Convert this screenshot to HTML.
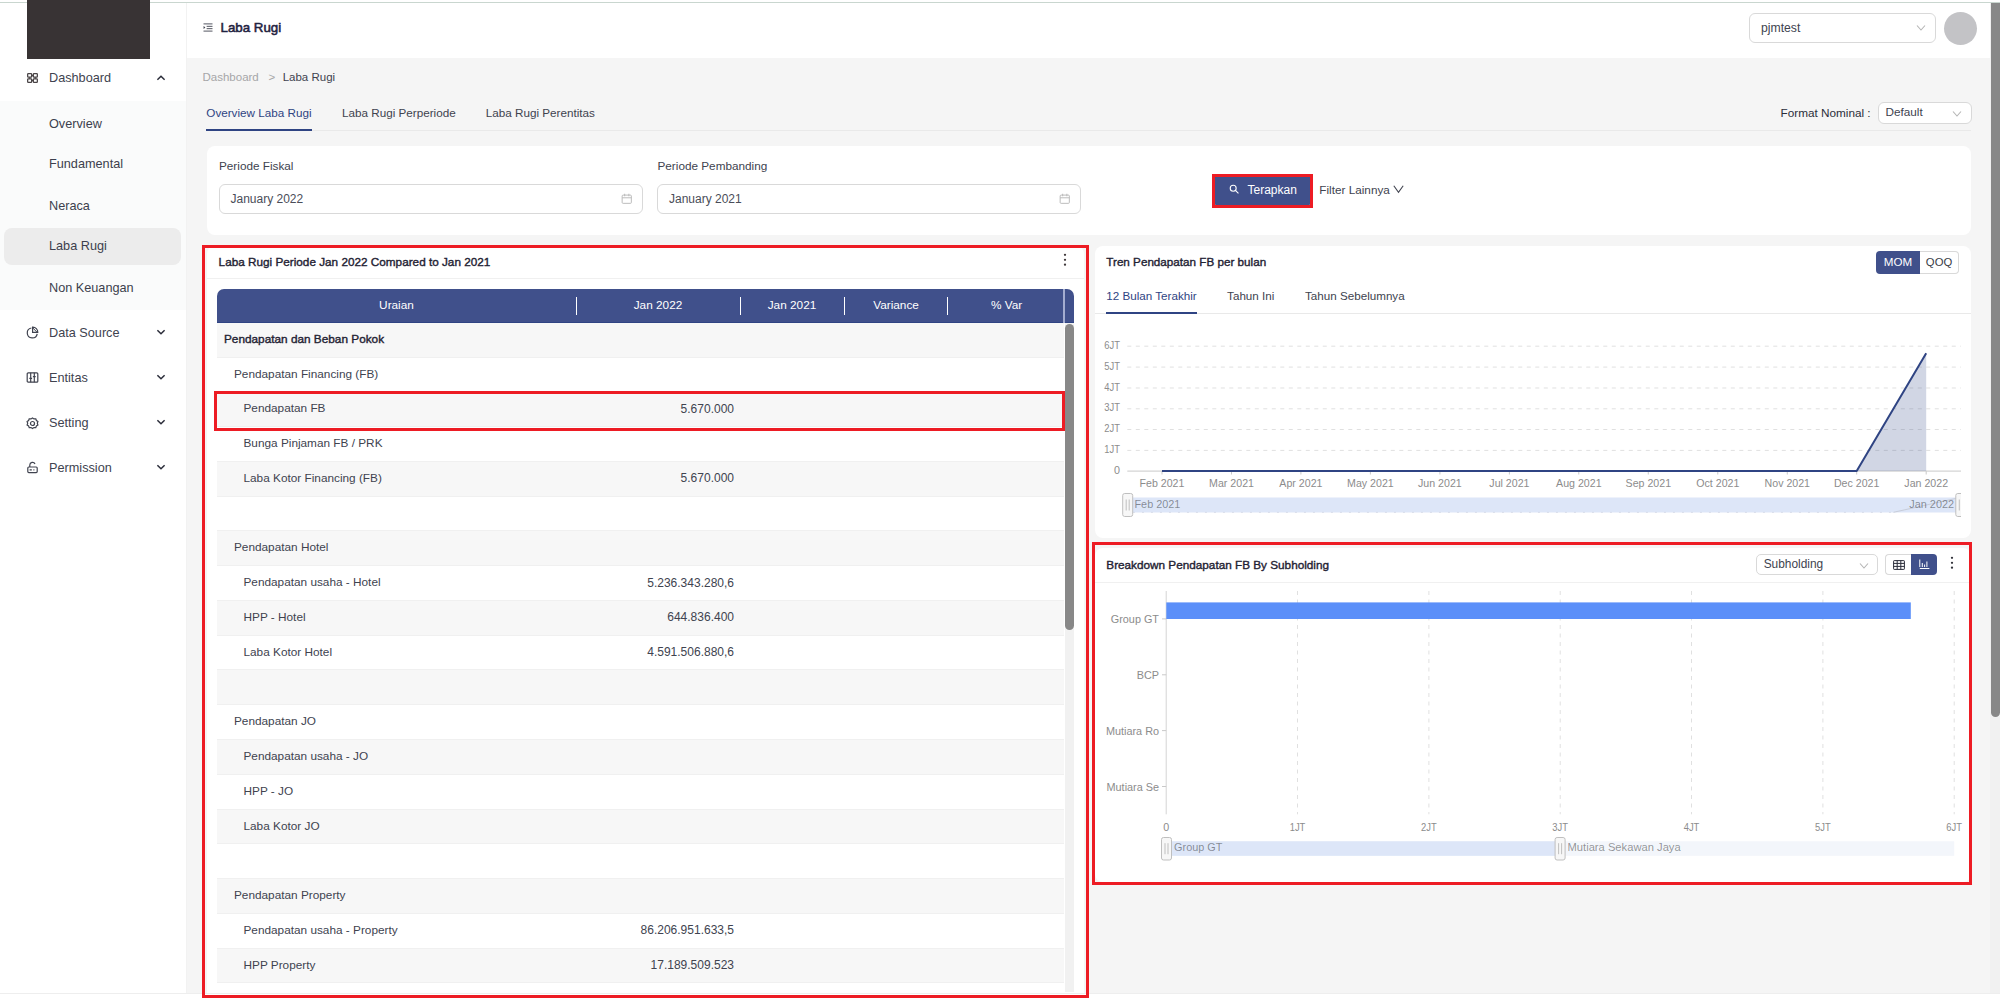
<!DOCTYPE html>
<html lang="id">
<head>
<meta charset="utf-8">
<title>Laba Rugi</title>
<style>
*{box-sizing:border-box;margin:0;padding:0}
html,body{width:2000px;height:999px;overflow:hidden;background:#f5f5f5}
body{font-family:"Liberation Sans",Arial,sans-serif;font-size:11.8px;color:#40434f;position:relative}
.abs{position:absolute}
#topline{position:absolute;left:0;top:0;width:2000px;height:3px;background:#fff;border-bottom:1px solid #c9d6cf}
/* sidebar */
#sidebar{position:absolute;left:0;top:3px;width:187px;height:991px;background:#fff;border-right:1px solid #f2f2f2}
#logo{position:absolute;left:27px;top:0;width:123px;height:58.5px;background:#383334;z-index:3}
#submenu{position:absolute;left:0;top:97.5px;width:186px;height:209.5px;background:#fafbfb}
#active{position:absolute;left:4px;top:224.5px;width:177px;height:37px;border-radius:8px;background:#ececec}
.nav{position:absolute;left:49px;font-size:12.7px;line-height:16px;color:#3c3f4d;white-space:nowrap}
.nav.top{color:#40434f}
.ico{position:absolute;left:26px;width:13px;height:13px}
.chev{position:absolute;left:156px;width:10px;height:10px}
/* header */
#header{position:absolute;left:187px;top:3px;width:1803px;height:54.5px;background:#fff}
#htitle{position:absolute;left:33.5px;top:16.3px;font-size:13.3px;font-weight:400;-webkit-text-stroke:0.55px #1f2240;color:#1f2240;line-height:18px;white-space:nowrap}
#usersel{position:absolute;left:1562px;top:10px;width:187px;height:29.5px;border:1px solid #d9d9d9;border-radius:6px;background:#fff}
#usersel span{position:absolute;left:11px;top:6.5px;font-size:12.2px;line-height:14px;color:#40434f}
#avatar{position:absolute;left:1756.5px;top:8.8px;width:33.2px;height:33.2px;border-radius:50%;background:#c3c3c6}
/* scrollbar */
#vscroll{position:absolute;left:1990px;top:3px;width:10px;height:996px;background:#f1f1f1}
#vthumb{position:absolute;left:0.6px;top:0;width:9.4px;height:713.6px;background:#888;border-radius:0 0 5px 5px}
#bottom{position:absolute;left:0;top:993.3px;width:2000px;height:6px;background:#fff;border-top:1px solid #eeeeee;z-index:4}
/* content */
.crumb{position:absolute;top:70px;font-size:11.5px;line-height:14px;white-space:nowrap}
.tab{position:absolute;top:106px;font-size:11.7px;line-height:14px;color:#40434f;white-space:nowrap}
.tab.on{color:#2f4483}
#tabline{position:absolute;left:207px;top:129.5px;width:1764px;height:1px;background:#e9e9e9}
#tabink{position:absolute;left:206px;top:128.5px;width:106px;height:2px;background:#2f4483}
.card{position:absolute;background:#fff;border-radius:8px}
.sel{position:absolute;border:1px solid #d9d9d9;border-radius:6px;background:#fff}
.lbl{position:absolute;font-size:11.75px;line-height:14px;color:#40434f;white-space:nowrap}
.inp{position:absolute;height:29.5px;border:1px solid #d9d9d9;border-radius:6px;background:#fff}
.inp span{position:absolute;left:11px;top:7px;font-size:12px;line-height:14px;color:#4a4d58}
.inp svg{position:absolute;right:10px;top:8.3px}
.red{position:absolute;z-index:5;border:3.3px solid #ed1c24;pointer-events:none}
.ctitle{position:absolute;font-size:11.75px;font-weight:400;-webkit-text-stroke:0.38px #1f2233;color:#1f2233;line-height:14px;white-space:nowrap}
.hline{position:absolute;height:1px;background:#f0f0f0}
/* table */
#thead{position:absolute;left:10px;top:43px;width:857px;height:33.5px;background:#40508b;border-radius:7px 7px 0 0;border-bottom:1px solid #2f4483}
#thead .th{position:absolute;top:8.7px;font-size:11.8px;line-height:14px;color:#fff;text-align:center;white-space:nowrap}
#thead i{position:absolute;top:7.3px;width:1.4px;height:18px;background:#fff}
#thead b{position:absolute;left:846.2px;top:0;width:1.6px;height:33.5px;background:#a3acd0}
#tbody{position:absolute;left:10px;top:76.5px;width:847px;height:669px;overflow:hidden;background:#fff}
.r{position:relative;height:34.77px;border-bottom:1px solid #f0f0f0;background:#fff}
.r.odd{background:#f7f7f7}
.r .lab{position:absolute;top:9px;line-height:14px;font-size:11.8px;color:#40434f;white-space:nowrap}
.r.l0 .lab{left:7px;font-weight:400;font-size:11.8px;-webkit-text-stroke:0.38px #1f2233;color:#1f2233}
.r.l1 .lab{left:17px}
.r.l2 .lab{left:26.5px}
.r .val{position:absolute;right:330px;top:9.5px;line-height:14px;font-size:12px;color:#40434f;white-space:nowrap}
#tscroll{position:absolute;left:857.5px;top:76.5px;width:9.5px;height:669px;background:#f1f1f1}
#tthumb{position:absolute;left:0.3px;top:1px;width:9px;height:306px;border-radius:4.5px;background:#888}
/* charts */
svg text.ax{font-family:"Liberation Sans",Arial,sans-serif;font-size:11.2px;fill:#8c8c8c}
svg text.sl{font-family:"Liberation Sans",Arial,sans-serif;font-size:11.2px;fill:#000;fill-opacity:.42}
svg .grid{stroke:#e0e0e0;stroke-width:1;stroke-dasharray:4 4.5}
.btn{position:absolute;font-size:11.6px;line-height:14px;text-align:center;white-space:nowrap}
</style>
</head>
<body>
<div id="topline"></div>

<aside id="sidebar">
  <div id="logo" style="top:-3px"></div>
  <div id="submenu"></div>
  <div id="active"></div>
  <nav>
    <svg class="abs" style="left:27px;top:70px" width="11" height="10" viewBox="0 0 11 10" fill="none" stroke="#494446" stroke-width="1.25"><rect x="0.65" y="0.65" width="4" height="3.5" rx="0.7"/><rect x="6.35" y="0.65" width="4" height="3.5" rx="0.7"/><rect x="0.65" y="5.85" width="4" height="3.5" rx="0.7"/><rect x="6.35" y="5.85" width="4" height="3.5" rx="0.7"/><path d="M4.65 2.4h1.7M4.65 7.6h1.7M2.65 4.15v1.7M8.35 4.15v1.7" stroke-width="1.5"/></svg>
    <span class="nav top" style="top:66.5px">Dashboard</span>
    <svg class="chev" style="top:69.8px" viewBox="0 0 10 10" fill="none" stroke="#2b2d3a" stroke-width="1.5"><path d="M1.4 6.8L5 3.2l3.6 3.6"/></svg>
    <span class="nav" style="top:112.5px">Overview</span>
    <span class="nav" style="top:152.5px">Fundamental</span>
    <span class="nav" style="top:194.5px">Neraca</span>
    <span class="nav" style="top:235px">Laba Rugi</span>
    <span class="nav" style="top:276.5px">Non Keuangan</span>
    <svg class="ico" style="top:322.5px" viewBox="0 0 13 13" fill="none" stroke="#40434f" stroke-width="1.2"><path d="M5.4 2a5 5 0 1 0 5.8 5.8"/><path d="M6.6 1.2a5 5 0 0 1 5.2 5.2H6.6z"/><path d="M6.6 1.8l4.4 4.4" stroke-width="1"/></svg>
    <span class="nav top" style="top:321.8px">Data Source</span>
    <svg class="chev" style="top:323.5px" viewBox="0 0 10 10" fill="none" stroke="#2b2d3a" stroke-width="1.5"><path d="M1.4 3.2L5 6.8l3.6-3.6"/></svg>
    <svg class="ico" style="top:367.5px" viewBox="0 0 13 13" fill="none" stroke="#40434f" stroke-width="1.2"><rect x="1.2" y="1.8" width="10.6" height="9.4" rx="1"/><path d="M4.7 1.8v9.4M8.3 1.8v9.4M3.3 7.4h2.8M6.9 5.6h2.8"/></svg>
    <span class="nav top" style="top:366.5px">Entitas</span>
    <svg class="chev" style="top:368.5px" viewBox="0 0 10 10" fill="none" stroke="#2b2d3a" stroke-width="1.5"><path d="M1.4 3.2L5 6.8l3.6-3.6"/></svg>
    <svg class="ico" style="top:413.5px" viewBox="0 0 13 13" fill="none" stroke="#40434f" stroke-width="1.2"><path d="M6.5 0.9l1.5 1 1.8-.1.6 1.7 1.5 1-.6 1.7.6 1.7-1.5 1-.6 1.7-1.8-.1-1.5 1-1.5-1-1.8.1-.6-1.7-1.5-1 .6-1.7-.6-1.7 1.5-1 .6-1.7 1.8.1z"/><circle cx="6.5" cy="6.5" r="2"/></svg>
    <span class="nav top" style="top:412.3px">Setting</span>
    <svg class="chev" style="top:414px" viewBox="0 0 10 10" fill="none" stroke="#2b2d3a" stroke-width="1.5"><path d="M1.4 3.2L5 6.8l3.6-3.6"/></svg>
    <svg class="ico" style="top:457.5px" viewBox="0 0 13 13" fill="none" stroke="#40434f" stroke-width="1.2"><rect x="1.8" y="6" width="9.4" height="5.6" rx="1"/><path d="M3.8 6V4a2.7 2.7 0 0 1 5.2-1"/><path d="M3.6 8.8h2.2M7.4 8.8h1"/></svg>
    <span class="nav top" style="top:457px">Permission</span>
    <svg class="chev" style="top:458.5px" viewBox="0 0 10 10" fill="none" stroke="#2b2d3a" stroke-width="1.5"><path d="M1.4 3.2L5 6.8l3.6-3.6"/></svg>
  </nav>
</aside>

<header id="header">
  <svg class="abs" style="left:15.5px;top:19.7px" width="10" height="9" viewBox="0 0 11 10" fill="none" stroke="#40434f" stroke-width="1"><path d="M0.5 1h10M4 3.7h6.5M4 6.3h6.5M0.5 9h10"/><path d="M0.6 3.4l2 1.6-2 1.6z" fill="#40434f" stroke="none"/></svg>
  <h1 id="htitle">Laba Rugi</h1>
  <div id="usersel"><span>pjmtest</span>
    <svg class="abs" style="left:166px;top:10px" width="10" height="8" viewBox="0 0 10 8" fill="none" stroke="#b5b5b5" stroke-width="1.1"><path d="M1 1.5l4 4.5 4-4.5"/></svg>
  </div>
  <div id="avatar"></div>
</header>

<div id="vscroll"><div id="vthumb"></div></div>

<main>
  <span class="crumb" style="left:202.5px;color:#a6a6a8">Dashboard</span>
  <span class="crumb" style="left:268.5px;color:#a6a6a8">&gt;</span>
  <span class="crumb" style="left:282.7px;color:#40434f">Laba Rugi</span>

  <span class="tab on" style="left:206.3px">Overview Laba Rugi</span>
  <span class="tab" style="left:342px">Laba Rugi Perperiode</span>
  <span class="tab" style="left:485.8px">Laba Rugi Perentitas</span>
  <div id="tabline"></div><div id="tabink"></div>
  <span class="lbl" style="left:1780.5px;top:106px;color:#2b2d3a">Format Nominal :</span>
  <div class="sel" style="left:1878px;top:102.3px;width:93.5px;height:21.7px"><span class="lbl" style="left:6.5px;top:2px">Default</span>
    <svg class="abs" style="left:72.5px;top:6.5px" width="10" height="8" viewBox="0 0 10 8" fill="none" stroke="#b5b5b5" stroke-width="1.1"><path d="M1 1.5l4 4.5 4-4.5"/></svg>
  </div>

  <!-- filter card -->
  <section class="card" style="left:207px;top:146.2px;width:1764px;height:88.5px">
    <span class="lbl" style="left:12px;top:12.8px">Periode Fiskal</span>
    <div class="inp" style="left:11.5px;top:38px;width:424.5px"><span>January 2022</span>
      <svg width="11.5" height="11.5" viewBox="0 0 12 12" fill="none" stroke="#b9b9b9" stroke-width="1"><rect x="1.2" y="2.2" width="9.6" height="8.6" rx="1"/><path d="M1.2 5h9.6M3.8 0.8v2.6M8.2 0.8v2.6"/></svg></div>
    <span class="lbl" style="left:450.5px;top:12.8px">Periode Pembanding</span>
    <div class="inp" style="left:450px;top:38px;width:424px"><span>January 2021</span>
      <svg width="11.5" height="11.5" viewBox="0 0 12 12" fill="none" stroke="#b9b9b9" stroke-width="1"><rect x="1.2" y="2.2" width="9.6" height="8.6" rx="1"/><path d="M1.2 5h9.6M3.8 0.8v2.6M8.2 0.8v2.6"/></svg></div>
    <button class="abs" style="left:1007px;top:30.3px;width:97px;height:29px;background:#40508b;border:0;border-radius:2px;color:#fff;font-family:inherit">
      <svg class="abs" style="left:14.5px;top:8px" width="10.5" height="10.5" viewBox="0 0 12 12" fill="none" stroke="#fff" stroke-width="1.25"><circle cx="4.8" cy="4.8" r="3.4"/><path d="M7.4 7.4l3.4 3.4"/></svg>
      <span class="abs" style="left:33.5px;top:6.8px;font-size:12px;line-height:14px">Terapkan</span>
    </button>
    <span class="lbl" style="left:1112.3px;top:36.5px">Filter Lainnya</span>
    <svg class="abs" style="left:1185.5px;top:39px" width="11" height="9" viewBox="0 0 11 9" fill="none" stroke="#40434f" stroke-width="1.1"><path d="M0.8 0.8l4.7 6.6 4.7-6.6"/></svg>
  </section>
  <div class="red" style="left:1211.8px;top:174.2px;width:101.6px;height:33.4px"></div>

  <!-- left panel -->
  <section class="card" id="lr" style="left:207px;top:246.3px;width:876.5px;height:760px;border-radius:8px 8px 0 0">
    <h2 class="ctitle" style="left:11.6px;top:8.7px">Laba Rugi Periode Jan 2022 Compared to Jan 2021</h2>
    <svg class="abs" style="left:855.5px;top:6.8px" width="4" height="14" viewBox="0 0 4 14" fill="#403a3c"><circle cx="2" cy="1.8" r="1.15"/><circle cx="2" cy="6.8" r="1.15"/><circle cx="2" cy="11.7" r="1.15"/></svg>
    <div class="hline" style="left:0;top:32px;width:876.5px"></div>
    <div id="thead">
      <span class="th" style="left:0;width:359px">Uraian</span><i style="left:358.5px"></i>
      <span class="th" style="left:359px;width:164px">Jan 2022</span><i style="left:522.5px"></i>
      <span class="th" style="left:523px;width:104px">Jan 2021</span><i style="left:626.5px"></i>
      <span class="th" style="left:627px;width:104px">Variance</span><i style="left:730px"></i>
      <span class="th" style="left:731px;width:117px">% Var</span><b></b>
    </div>
    <div id="tbody">
<div class="r l0 odd"><span class="lab">Pendapatan dan Beban Pokok</span><span class="val"></span></div>
<div class="r l1"><span class="lab">Pendapatan Financing (FB)</span><span class="val"></span></div>
<div class="r l2 odd"><span class="lab">Pendapatan FB</span><span class="val">5.670.000</span></div>
<div class="r l2"><span class="lab">Bunga Pinjaman FB / PRK</span><span class="val"></span></div>
<div class="r l2 odd"><span class="lab">Laba Kotor Financing (FB)</span><span class="val">5.670.000</span></div>
<div class="r l2"><span class="lab"></span><span class="val"></span></div>
<div class="r l1 odd"><span class="lab">Pendapatan Hotel</span><span class="val"></span></div>
<div class="r l2"><span class="lab">Pendapatan usaha - Hotel</span><span class="val">5.236.343.280,6</span></div>
<div class="r l2 odd"><span class="lab">HPP - Hotel</span><span class="val">644.836.400</span></div>
<div class="r l2"><span class="lab">Laba Kotor Hotel</span><span class="val">4.591.506.880,6</span></div>
<div class="r l2 odd"><span class="lab"></span><span class="val"></span></div>
<div class="r l1"><span class="lab">Pendapatan JO</span><span class="val"></span></div>
<div class="r l2 odd"><span class="lab">Pendapatan usaha - JO</span><span class="val"></span></div>
<div class="r l2"><span class="lab">HPP - JO</span><span class="val"></span></div>
<div class="r l2 odd"><span class="lab">Laba Kotor JO</span><span class="val"></span></div>
<div class="r l2"><span class="lab"></span><span class="val"></span></div>
<div class="r l1 odd"><span class="lab">Pendapatan Property</span><span class="val"></span></div>
<div class="r l2"><span class="lab">Pendapatan usaha - Property</span><span class="val">86.206.951.633,5</span></div>
<div class="r l2 odd"><span class="lab">HPP Property</span><span class="val">17.189.509.523</span></div>
<div class="r l2"><span class="lab">Laba Kotor Property</span><span class="val">69.017.442.110,5</span></div>
    </div>
    <div id="tscroll"><div id="tthumb"></div></div>
  </section>
  <div class="red" style="left:201.9px;top:245px;width:887.1px;height:753px;border-width:3.7px"></div>
  <div class="red" style="left:214.1px;top:391.1px;width:850.7px;height:39.9px;border-width:3.3px"></div>

  <!-- trend panel -->
  <section class="card" style="left:1094.5px;top:246px;width:876.5px;height:291.5px">
    <h2 class="ctitle" style="left:11.8px;top:9px;font-size:11.68px">Tren Pendapatan FB per bulan</h2>
    <div class="btn" style="left:781.5px;top:5px;width:44px;height:23.2px;background:#40508b;color:#fff;border-radius:4px 0 0 4px;padding-top:4px">MOM</div>
    <div class="btn" style="left:825.3px;top:5px;width:39.5px;height:23.2px;background:#fff;color:#3a3c48;border:1px solid #d9d9d9;border-left:0;border-radius:0 4px 4px 0;padding-top:3px;font-size:11.3px">QOQ</div>
    <span class="tab on" style="left:11.8px;top:43px;font-size:11.65px">12 Bulan Terakhir</span>
    <span class="tab" style="left:132.6px;top:43px;font-size:11.65px">Tahun Ini</span>
    <span class="tab" style="left:210.5px;top:43px;font-size:11.65px">Tahun Sebelumnya</span>
    <div class="hline" style="left:0;top:67.2px;width:876.5px;background:#e9e9e9"></div>
    <div class="abs" style="left:11.8px;top:65.6px;width:90.6px;height:2.2px;background:#2f4483"></div>
    <svg class="abs" style="left:0;top:0" width="866.2" height="291.5" viewBox="0 0 866.2 291.5">
<line x1="32.3" x2="866" y1="100.2" y2="100.2" class="grid"/>
<text transform="translate(25 102.9) scale(0.84 1)" class="ax" text-anchor="end">6JT</text>
<line x1="32.3" x2="866" y1="121.1" y2="121.1" class="grid"/>
<text transform="translate(25 123.8) scale(0.84 1)" class="ax" text-anchor="end">5JT</text>
<line x1="32.3" x2="866" y1="142.0" y2="142.0" class="grid"/>
<text transform="translate(25 144.7) scale(0.84 1)" class="ax" text-anchor="end">4JT</text>
<line x1="32.3" x2="866" y1="162.8" y2="162.8" class="grid"/>
<text transform="translate(25 165.5) scale(0.84 1)" class="ax" text-anchor="end">3JT</text>
<line x1="32.3" x2="866" y1="183.5" y2="183.5" class="grid"/>
<text transform="translate(25 186.2) scale(0.84 1)" class="ax" text-anchor="end">2JT</text>
<line x1="32.3" x2="866" y1="204.4" y2="204.4" class="grid"/>
<text transform="translate(25 207.1) scale(0.84 1)" class="ax" text-anchor="end">1JT</text>
<text transform="translate(25 227.8) scale(0.96 1)" class="ax" text-anchor="end">0</text>
<line x1="32.3" x2="866" y1="225.1" y2="225.1" stroke="#c9c9c9" stroke-width="1"/>
<line x1="67.0" x2="67.0" y1="225.1" y2="228.5" stroke="#c9c9c9" stroke-width="1"/>
<text transform="translate(67.0 241.2) scale(0.95 1)" class="ax" text-anchor="middle">Feb 2021</text>
<line x1="136.5" x2="136.5" y1="225.1" y2="228.5" stroke="#c9c9c9" stroke-width="1"/>
<text transform="translate(136.5 241.2) scale(0.95 1)" class="ax" text-anchor="middle">Mar 2021</text>
<line x1="205.9" x2="205.9" y1="225.1" y2="228.5" stroke="#c9c9c9" stroke-width="1"/>
<text transform="translate(205.9 241.2) scale(0.95 1)" class="ax" text-anchor="middle">Apr 2021</text>
<line x1="275.4" x2="275.4" y1="225.1" y2="228.5" stroke="#c9c9c9" stroke-width="1"/>
<text transform="translate(275.4 241.2) scale(0.95 1)" class="ax" text-anchor="middle">May 2021</text>
<line x1="344.9" x2="344.9" y1="225.1" y2="228.5" stroke="#c9c9c9" stroke-width="1"/>
<text transform="translate(344.9 241.2) scale(0.95 1)" class="ax" text-anchor="middle">Jun 2021</text>
<line x1="414.4" x2="414.4" y1="225.1" y2="228.5" stroke="#c9c9c9" stroke-width="1"/>
<text transform="translate(414.4 241.2) scale(0.95 1)" class="ax" text-anchor="middle">Jul 2021</text>
<line x1="483.8" x2="483.8" y1="225.1" y2="228.5" stroke="#c9c9c9" stroke-width="1"/>
<text transform="translate(483.8 241.2) scale(0.95 1)" class="ax" text-anchor="middle">Aug 2021</text>
<line x1="553.3" x2="553.3" y1="225.1" y2="228.5" stroke="#c9c9c9" stroke-width="1"/>
<text transform="translate(553.3 241.2) scale(0.95 1)" class="ax" text-anchor="middle">Sep 2021</text>
<line x1="622.8" x2="622.8" y1="225.1" y2="228.5" stroke="#c9c9c9" stroke-width="1"/>
<text transform="translate(622.8 241.2) scale(0.95 1)" class="ax" text-anchor="middle">Oct 2021</text>
<line x1="692.3" x2="692.3" y1="225.1" y2="228.5" stroke="#c9c9c9" stroke-width="1"/>
<text transform="translate(692.3 241.2) scale(0.95 1)" class="ax" text-anchor="middle">Nov 2021</text>
<line x1="761.7" x2="761.7" y1="225.1" y2="228.5" stroke="#c9c9c9" stroke-width="1"/>
<text transform="translate(761.7 241.2) scale(0.95 1)" class="ax" text-anchor="middle">Dec 2021</text>
<line x1="831.2" x2="831.2" y1="225.1" y2="228.5" stroke="#c9c9c9" stroke-width="1"/>
<text transform="translate(831.2 241.2) scale(0.95 1)" class="ax" text-anchor="middle">Jan 2022</text>
<polygon points="761.7,225.1 831.2,107.2 831.2,225.1" fill="#2f4483" fill-opacity="0.22"/>
<polyline points="67.0,225.1 761.7,225.1 831.2,107.2" fill="none" stroke="#2f4483" stroke-width="2" stroke-linejoin="round"/>
<rect x="33" y="251.5" width="829" height="15" fill="#dde6f8"/>
<path d="M798.5 266.3 L862 252.2" fill="none" stroke="#c3c7d3" stroke-width="1" stroke-opacity="0.85"/>
<line x1="38" x2="798" y1="266.4" y2="266.4" stroke="#c9cfdd" stroke-width="0.8" stroke-dasharray="2 7" stroke-opacity="0.7"/>
<rect x="27.7" y="247.5" width="10" height="23" rx="2" fill="#f7f7f7" stroke="#bfbfbf"/>
<path d="M31.2 253.5v11M34.2 253.5v11" stroke="#bfbfbf" stroke-width="1" fill="none"/>
<rect x="860.8" y="247.5" width="10" height="23" rx="2" fill="#f7f7f7" stroke="#bfbfbf"/>
<path d="M864.3 253.5v11M867.3 253.5v11" stroke="#bfbfbf" stroke-width="1" fill="none"/>
<text transform="translate(39.5 262) scale(0.97 1)" class="sl" text-anchor="start">Feb 2021</text>
<text transform="translate(859 262) scale(0.97 1)" class="sl" text-anchor="end">Jan 2022</text>
    </svg>
  </section>

  <!-- breakdown panel -->
  <section class="card" style="left:1094.5px;top:548px;width:876.5px;height:334px">
    <h2 class="ctitle" style="left:11.8px;top:10.2px">Breakdown Pendapatan FB By Subholding</h2>
    <div class="sel" style="left:661.7px;top:6.2px;width:121.5px;height:21.3px;border-radius:5px"><span class="lbl" style="left:6.5px;top:2.3px;font-size:11.9px">Subholding</span>
      <svg class="abs" style="left:101.5px;top:6.5px" width="10" height="8" viewBox="0 0 10 8" fill="none" stroke="#b5b5b5" stroke-width="1.1"><path d="M1 1.5l4 4.5 4-4.5"/></svg>
    </div>
    <div class="abs" style="left:790.7px;top:6.2px;width:26px;height:21.3px;border:1px solid #d9d9d9;border-right:0;border-radius:4px 0 0 4px;background:#fff">
      <svg class="abs" style="left:6.5px;top:4.5px" width="12" height="10" viewBox="0 0 12 10" fill="none" stroke="#2b2d3a" stroke-width="1"><rect x="0.6" y="0.6" width="10.8" height="8.8" rx="0.6"/><path d="M0.6 3.4h10.8M0.6 6.4h10.8M4.2 0.6v8.8M7.8 0.6v8.8"/></svg>
    </div>
    <div class="abs" style="left:816.3px;top:6.2px;width:26.7px;height:21.3px;border-radius:0 4px 4px 0;background:#40508b">
      <svg class="abs" style="left:8px;top:5px" width="11" height="10" viewBox="0 0 11 10" fill="none" stroke="#fff" stroke-width="1"><path d="M0.8 0.5v7.6M0.8 9.5h9.6"/><path d="M3.3 4v4M5.6 5.5v2.5M7.9 2.5v5.5"/></svg>
    </div>
    <svg class="abs" style="left:855.4px;top:8.1px" width="4" height="14" viewBox="0 0 4 14" fill="#33343c"><circle cx="2" cy="1.8" r="1.15"/><circle cx="2" cy="6.8" r="1.15"/><circle cx="2" cy="11.7" r="1.15"/></svg>
    <div class="hline" style="left:0;top:33.5px;width:876.5px"></div>
    <svg class="abs" style="left:0;top:0" width="876.5" height="334" viewBox="0 0 876.5 334">
<text transform="translate(71.2 283) scale(0.96 1)" class="ax" text-anchor="middle">0</text>
<line x1="202.5" x2="202.5" y1="43" y2="266.3" class="grid"/>
<text transform="translate(202.5 283) scale(0.84 1)" class="ax" text-anchor="middle">1JT</text>
<line x1="333.9" x2="333.9" y1="43" y2="266.3" class="grid"/>
<text transform="translate(333.9 283) scale(0.84 1)" class="ax" text-anchor="middle">2JT</text>
<line x1="465.2" x2="465.2" y1="43" y2="266.3" class="grid"/>
<text transform="translate(465.2 283) scale(0.84 1)" class="ax" text-anchor="middle">3JT</text>
<line x1="596.5" x2="596.5" y1="43" y2="266.3" class="grid"/>
<text transform="translate(596.5 283) scale(0.84 1)" class="ax" text-anchor="middle">4JT</text>
<line x1="727.9" x2="727.9" y1="43" y2="266.3" class="grid"/>
<text transform="translate(727.9 283) scale(0.84 1)" class="ax" text-anchor="middle">5JT</text>
<line x1="859.2" x2="859.2" y1="43" y2="266.3" class="grid"/>
<text transform="translate(859.2 283) scale(0.84 1)" class="ax" text-anchor="middle">6JT</text>
<line x1="71.2" x2="71.2" y1="43" y2="266.3" stroke="#d4d4d4" stroke-width="1"/>
<line x1="67.0" x2="71.2" y1="70.9" y2="70.9" stroke="#c9c9c9" stroke-width="1"/>
<text transform="translate(64.0 74.9) scale(0.97 1)" class="ax" text-anchor="end">Group GT</text>
<line x1="67.0" x2="71.2" y1="126.8" y2="126.8" stroke="#c9c9c9" stroke-width="1"/>
<text transform="translate(64.0 130.8) scale(0.97 1)" class="ax" text-anchor="end">BCP</text>
<line x1="67.0" x2="71.2" y1="182.6" y2="182.6" stroke="#c9c9c9" stroke-width="1"/>
<text transform="translate(64.0 186.6) scale(0.97 1)" class="ax" text-anchor="end">Mutiara Ro</text>
<line x1="67.0" x2="71.2" y1="238.5" y2="238.5" stroke="#c9c9c9" stroke-width="1"/>
<text transform="translate(64.0 242.5) scale(0.97 1)" class="ax" text-anchor="end">Mutiara Se</text>
<rect x="71.3" y="54.4" width="744.5" height="16.6" fill="#5b8ff9"/>
<rect x="71.5" y="293.3" width="787.7" height="14.5" fill="#f3f6fb"/>
<rect x="71.5" y="293.3" width="393.8" height="14.5" fill="#dde6f8"/>
<rect x="66.5" y="289.5" width="10" height="22.5" rx="2" fill="#f7f7f7" stroke="#bfbfbf"/>
<path d="M70.0 295.2v11M73.0 295.2v11" stroke="#bfbfbf" stroke-width="1" fill="none"/>
<rect x="460.1" y="289.5" width="10" height="22.5" rx="2" fill="#f7f7f7" stroke="#bfbfbf"/>
<path d="M463.6 295.2v11M466.6 295.2v11" stroke="#bfbfbf" stroke-width="1" fill="none"/>
<text transform="translate(79.1 303.3) scale(0.97 1)" class="sl" text-anchor="start">Group GT</text>
<text transform="translate(472.5 303.3) scale(1.0 1)" class="sl" text-anchor="start">Mutiara Sekawan Jaya</text>
    </svg>
  </section>
  <div class="red" style="left:1092.2px;top:542px;width:879.8px;height:342.5px;border-width:3.7px"></div>
</main>

<div id="bottom"></div>
</body>
</html>
